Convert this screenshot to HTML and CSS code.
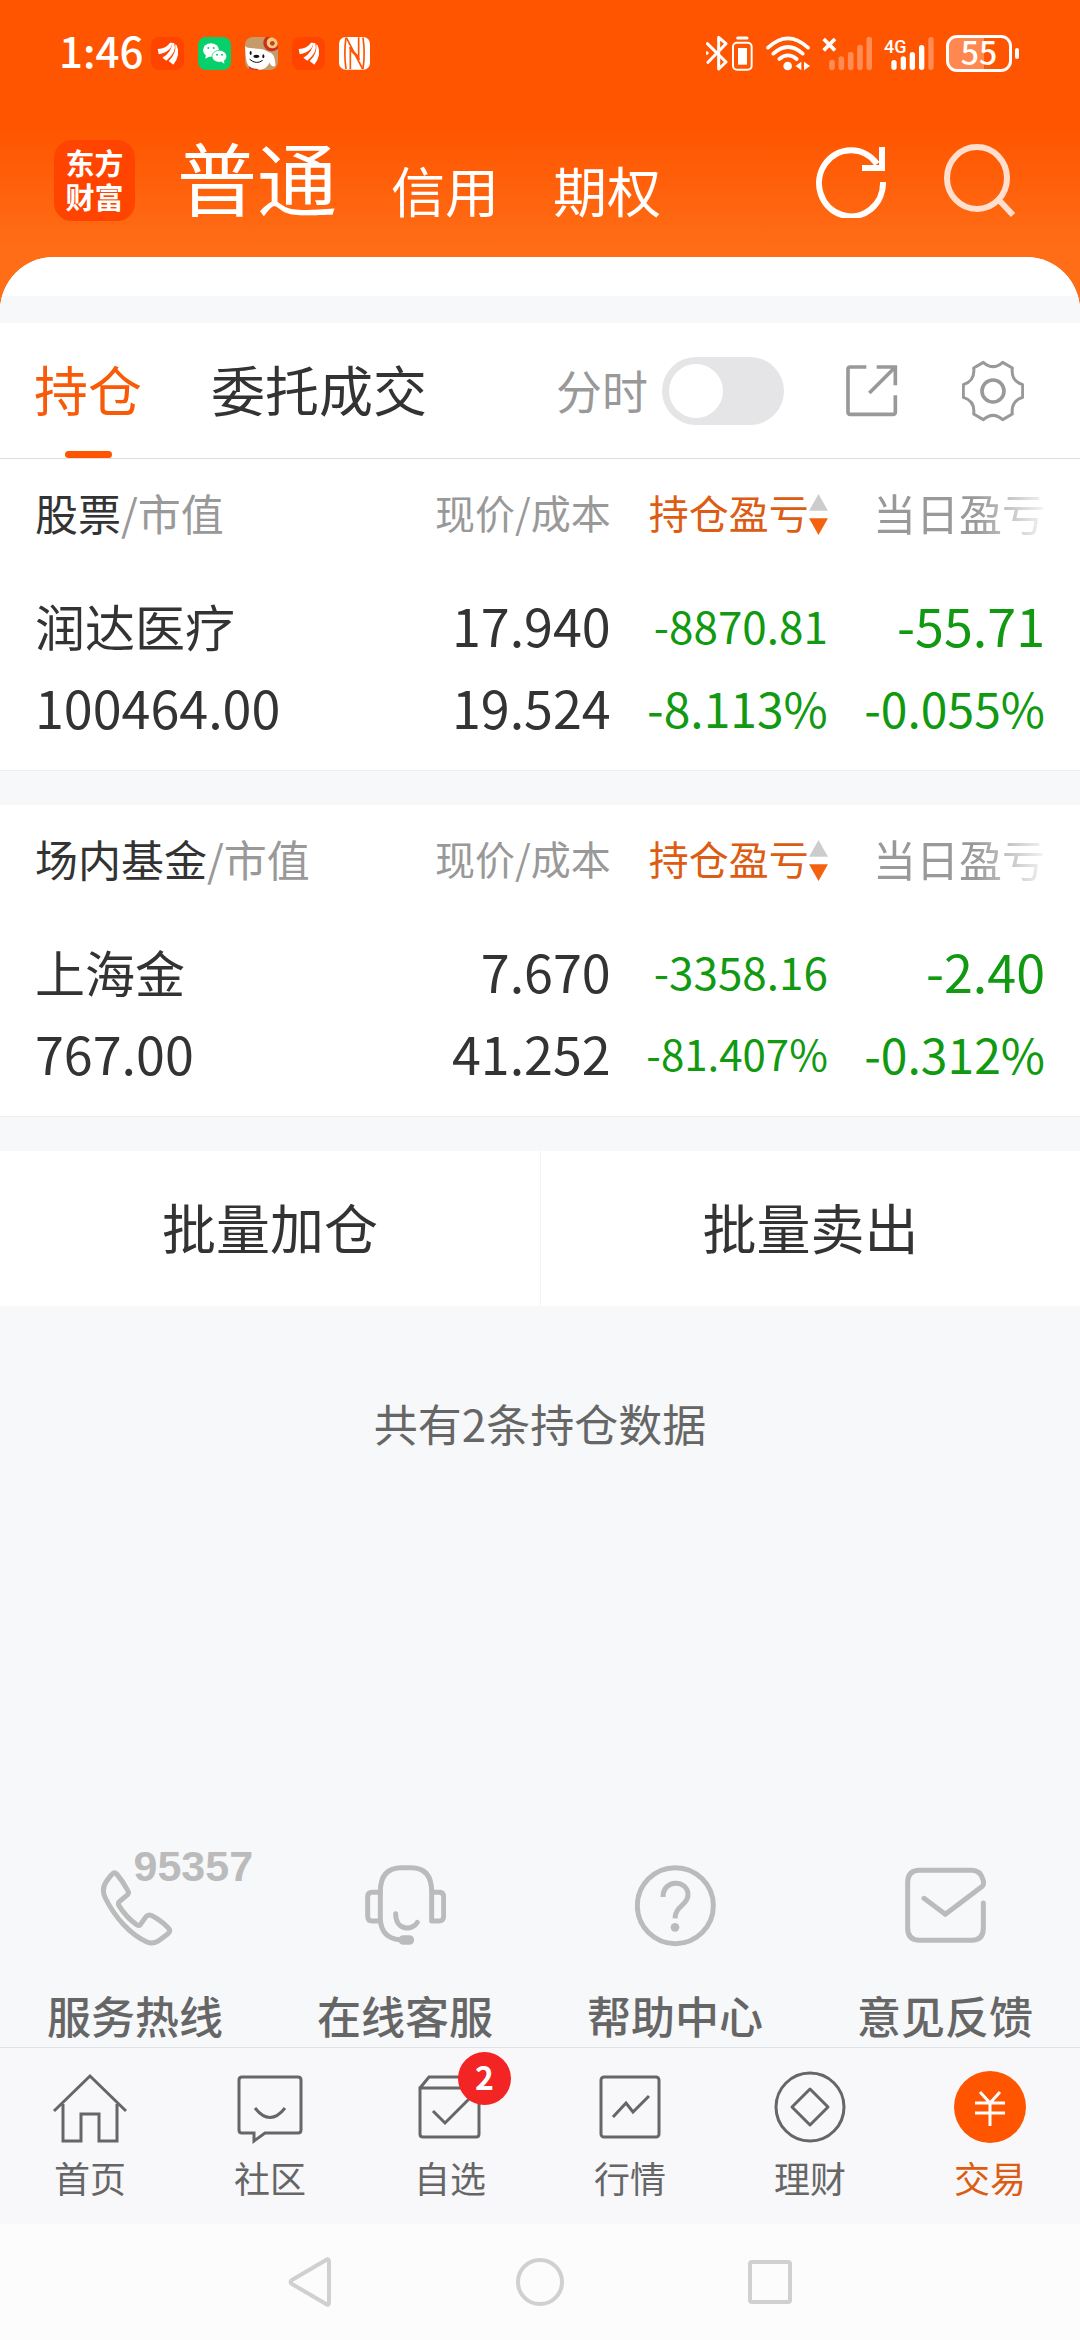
FILE: index.html
```html
<!DOCTYPE html>
<html lang="zh-CN">
<head>
<meta charset="utf-8">
<meta name="viewport" content="width=device-width, initial-scale=1">
<title>普通交易 - 持仓</title>
<link rel="stylesheet" href="styles.css">
</head>
<body>
<svg class="defs" aria-hidden="true">
  <symbol id="wing" viewBox="0 0 99 99">
    <g fill="#fff"><path d="M20 36Q46 35 57 17L63 17Q64 42 23 52Z"/><path d="M34 62Q62 46 64 17L70 19Q78 46 46 71Z"/><path d="M53 72Q76 52 73 22L77 25Q90 54 67 83Z"/></g>
  </symbol>
  <symbol id="sorter" viewBox="0 0 18 40">
    <path d="M9 0 18 16H0Z" fill="#ccc"/><path d="M0 23H18L9 39Z" fill="#f4620f"/>
  </symbol>
</svg>

<header class="top">
  <div class="status">
    <div class="status-side">
      <time class="clock">1:46</time>
      <div class="notices">
        <svg class="app dark" viewBox="0 0 99 99"><use href="#wing"/></svg>
        <svg class="app green" viewBox="0 0 99 99"><ellipse cx="39" cy="39" rx="24" ry="20" fill="#fff"/><path d="M24 50 22 65 38 57Z" fill="#fff"/><ellipse cx="64" cy="58" rx="22" ry="18" fill="#fff" stroke="#07cf69" stroke-width="2"/><path d="M70 74 79 80 78 68Z" fill="#fff"/><g fill="#07cf69"><circle cx="31" cy="33" r="3"/><circle cx="47" cy="33" r="3"/><circle cx="57" cy="53" r="3"/><circle cx="72" cy="53" r="3"/></g></svg>
        <svg class="app tan" viewBox="0 0 99 99"><circle cx="80" cy="18" r="25" fill="#c9301a"/><circle cx="82" cy="17" r="17" fill="#f8c77c"/><circle cx="82" cy="19" r="7" fill="#b5442a"/><path d="M0 28C14 40 45 28 66 43L78 48C88 52 92 75 91 86C84 92 77 86 73 76C67 102 30 105 12 88C1 76 2 48 0 28Z" fill="#fff"/><path d="M12 88Q22 96 40 96V99H12Z" fill="#d33"/><ellipse cx="34" cy="58" rx="9" ry="5" fill="#111"/><ellipse cx="17" cy="48" rx="3" ry="6" fill="#111"/><ellipse cx="55" cy="58" rx="3" ry="6" fill="#111"/><path d="M14 67Q34 84 53 70" fill="none" stroke="#111" stroke-width="3"/></svg>
        <svg class="app dark" viewBox="0 0 99 99"><use href="#wing"/></svg>
        <svg class="nfc" viewBox="0 0 93 99"><rect width="93" height="98" rx="20" fill="#fff"/><g fill="none" stroke="#ff5500" stroke-width="5"><path d="M21 2Q14 50 21 96M72 2Q79 50 72 96"/><path d="M34 97V38L62 68M59 1V60L31 31M22 2 71 96"/></g></svg>
      </div>
    </div>
    <div class="status-side right">
      <svg width="48" height="36" viewBox="18 30 144 108"><g fill="none" stroke="#fff" stroke-width="9" stroke-linejoin="round" stroke-linecap="round"><path d="M22 56 78 111 56 132V37L78 56 24 112"/><rect x="99" y="53" width="56" height="81" rx="12" stroke-width="6"/><path d="M113 39H141"/></g><circle cx="21" cy="84" r="5" fill="#fff"/><rect x="114" y="69" width="27" height="50" fill="#fff"/></svg>
      <svg width="44" height="36" viewBox="195 30 132 108"><g fill="none" stroke="#fff" stroke-width="11" stroke-linecap="round"><path d="M201 68Q261 12 321 68M217 86Q261 46 305 86M235 102Q261 80 287 102"/></g><circle cx="260" cy="123" r="13" fill="#fff"/><path d="M301 110V136L284 123ZM309 110V136L327 123Z" fill="#fff"/></svg>
      <svg width="50" height="36" viewBox="363 30 150 108"><path d="M368 42 402 76M402 42 368 76" stroke="#fff" stroke-width="11"/><g stroke="#ff8c55" stroke-width="17" stroke-linecap="round"><path d="M393 113V127M421 102V127M449 89V127M477 68V127M505 44V127"/></g></svg>
      <svg width="50" height="36" viewBox="549 30 150 108"><text class="net" x="549" y="83">4G</text><g stroke="#fff" stroke-width="16" stroke-linecap="round"><path d="M579 113V127M607 102V127M634 89V127M662 68V127"/><path d="M690 44V127" stroke="#ff8c55"/></g></svg>
      <div class="battery"><span class="level">55</span></div>
    </div>
  </div>

  <div class="title-bar">
    <div class="brand">东方<br>财富</div>
    <nav class="accounts">
      <a class="account current" href="#normal">普通</a>
      <a class="account" href="#credit">信用</a>
      <a class="account" href="#option">期权</a>
    </nav>
    <div class="tools">
      <button class="icon-btn" aria-label="刷新"><svg width="72" height="74" viewBox="0 0 72 74" fill="none" stroke="#fff" stroke-width="6"><path d="M67 38A32 33 0 1 1 61 20"/><path d="M66 3V24H46"/></svg></button>
      <button class="icon-btn faded" aria-label="搜索"><svg width="72" height="74" viewBox="0 0 72 74" fill="none" stroke="#fff" stroke-width="6"><ellipse cx="33" cy="34" rx="30" ry="31"/><path d="M54 55 69 71"/></svg></button>
    </div>
  </div>
</header>

<main class="sheet">
  <div class="sheet-lip"></div>

  <div class="tabs">
    <button class="tab active">持仓</button>
    <button class="tab">委托成交</button>
    <div class="tab-tools">
      <label class="toggle"><span class="toggle-text">分时</span><input class="switch" type="checkbox"></label>
      <button class="icon-btn" aria-label="分享"><svg width="54" height="54" viewBox="43 70 162 162" fill="none" stroke="#999" stroke-width="11"><path d="M104 79H56Q49 79 49 86V214Q49 221 56 221H184Q191 221 191 214V164"/><path d="M135 79H191V134M191 79 113 157"/></svg></button>
      <button class="icon-btn" aria-label="设置"><svg width="62" height="62" viewBox="393 58 186 186" fill="none" stroke="#999" stroke-width="9" stroke-linejoin="round"><path d="M515 65 544 82Q539 121 575 132V170Q539 181 544 220L515 237Q486 211 457 237L428 220Q433 181 397 170V132Q433 121 428 82L457 65Q486 91 515 65Z"/><circle cx="486" cy="151" r="33" stroke-width="11"/></svg></button>
    </div>
  </div>

  <section class="card">
    <table class="holdings">
      <thead><tr>
        <th class="name"><span class="kind">股票</span>/市值</th>
        <th>现价/成本</th>
        <th><button class="sort">持仓盈亏<svg width="19" height="42"><use href="#sorter"/></svg></button></th>
        <th class="large"><span class="fade">当日盈亏</span></th>
      </tr></thead>
      <tbody>
        <tr><td class="name title">润达医疗</td><td>17.940</td><td class="down small">-8870.81</td><td class="down">-55.71</td></tr>
        <tr><td class="name">100464.00</td><td>19.524</td><td class="down mid">-8.113%</td><td class="down mid">-0.055%</td></tr>
      </tbody>
    </table>
  </section>

  <section class="card">
    <table class="holdings">
      <thead><tr>
        <th class="name"><span class="kind">场内基金</span>/市值</th>
        <th>现价/成本</th>
        <th><button class="sort">持仓盈亏<svg width="19" height="42"><use href="#sorter"/></svg></button></th>
        <th class="large"><span class="fade">当日盈亏</span></th>
      </tr></thead>
      <tbody>
        <tr><td class="name title">上海金</td><td>7.670</td><td class="down small">-3358.16</td><td class="down">-2.40</td></tr>
        <tr><td class="name">767.00</td><td>41.252</td><td class="down tiny">-81.407%</td><td class="down mid">-0.312%</td></tr>
      </tbody>
    </table>
  </section>

  <div class="batch">
    <button class="batch-btn">批量加仓</button>
    <button class="batch-btn">批量卖出</button>
  </div>

  <p class="note">共有2条持仓数据</p>

  <nav class="services">
    <a class="service" href="#hotline">
      <span class="service-icon"><svg viewBox="-12 2 243 246"><path d="M42 27Q33 35 23 50C10 68 10 83 19 101C46 156 92 210 144 233Q160 240 178 230L207 208Q216 200 208 191Q186 168 156 153Q147 150 141 157L124 181Q119 186 111 180Q80 157 60 124Q56 116 61 112L86 91Q91 85 86 78Q72 51 53 29Q47 23 42 27Z"/></svg><span class="hotline-no">95357</span></span>
      服务热线
    </a>
    <a class="service" href="#chat">
      <span class="service-icon"><svg viewBox="0 0 243 246"><path d="M46 82H22Q8 82 8 96V152Q8 168 22 168H46"/><path d="M46 168V80Q46 8 110 8H138Q200 8 200 80V168H222Q236 168 236 152V96Q236 82 222 82H200M46 164Q50 220 104 224"/><path d="M92 146C92 200 144 196 157 172"/><rect x="108" y="218" width="32" height="14" rx="7" fill="#bbb"/></svg></span>
      在线客服
    </a>
    <a class="service" href="#help">
      <span class="service-icon"><svg viewBox="0 0 243 246"><circle cx="121" cy="122" r="114"/><path stroke-linecap="butt" d="M84 96C84 40 159 44 159 89C159 120 121 122 120 160"/><circle cx="120" cy="187" r="13" fill="#bbb" stroke="none"/></svg></span>
      帮助中心
    </a>
    <a class="service" href="#feedback">
      <span class="service-icon"><svg viewBox="0 0 243 246"><path d="M57 100 121 148 232 64Q238 58 234 44Q226 16 200 16H44Q8 16 8 52V190Q8 226 44 226H200Q235 226 235 190V114"/></svg></span>
      意见反馈
    </a>
  </nav>
</main>

<nav class="tabbar">
  <a class="tabbar-item" href="#home">
    <svg viewBox="0 0 76 76"><path d="M2 41 38 6 74 41M11 34V71H29V44H47V71H65V34"/></svg>首页</a>
  <a class="tabbar-item" href="#community">
    <svg viewBox="0 0 76 76"><path d="M10 7H66Q69 7 69 10V60Q69 63 66 63H33L22 71V63H10Q7 63 7 60V10Q7 7 10 7Z"/><path d="M23 38Q38 57 53 38"/></svg>社区</a>
  <a class="tabbar-item" href="#watchlist">
    <svg viewBox="0 0 76 76"><path d="M8 18 17 7H59L67 18V64Q67 67 64 67H11Q8 67 8 64V18H67M21 41 33 53 58 28"/></svg>自选<span class="badge">2</span></a>
  <a class="tabbar-item" href="#market">
    <svg viewBox="0 0 76 76"><rect x="9" y="7" width="58" height="60" rx="3"/><path d="M21 47 34 33 41 42 57 26"/></svg>行情</a>
  <a class="tabbar-item" href="#wealth">
    <svg viewBox="0 0 76 76"><circle cx="38" cy="37" r="34"/><path stroke-linejoin="round" d="M38 19 56 37 38 55 20 37Z"/></svg>理财</a>
  <a class="tabbar-item active" href="#trade">
    <svg viewBox="0 0 76 76"><circle cx="38" cy="37" r="36" fill="#ff5500" stroke="none"/><path stroke="#fff" d="M28 22 38 33 48 22M38 33V56M23 33H53M23 43H53"/></svg>交易</a>
</nav>

<div class="sysnav">
  <button class="icon-btn" aria-label="返回"><svg width="48" height="52" viewBox="0 0 48 52"><path d="M6 24Q3 26 6 28L40 48Q43 50 43 46V6Q43 2 40 4Z"/></svg></button>
  <button class="icon-btn" aria-label="主屏幕"><svg width="52" height="52" viewBox="0 0 52 52"><circle cx="26" cy="26" r="22"/></svg></button>
  <button class="icon-btn" aria-label="最近任务"><svg width="48" height="52" viewBox="0 0 48 52"><rect x="4" y="6" width="40" height="40" rx="2"/></svg></button>
</div>
</body>
</html>
```

FILE: styles.css
```css
* { box-sizing: border-box; }

body {
  margin: 0;
  min-height: 100vh;
  display: flex;
  flex-direction: column;
  background: #f7f8fa;
  color: #333;
  font-family: "Noto Sans CJK SC", sans-serif;
}

a { color: inherit; text-decoration: none; }

button {
  border: 0;
  padding: 0;
  background: none;
  color: inherit;
  font: inherit;
}

svg { display: block; }
.defs { position: absolute; width: 0; height: 0; }
.icon-btn { display: flex; }

/* Header */
.top {
  padding-bottom: 86px;
  background: linear-gradient(#ff5500 126px, #ff6d17 250px);
  color: #fff;
}

.status {
  display: flex;
  justify-content: space-between;
  height: 106px;
  padding: 0 61px 0 59px;
}

.status-side { display: flex; align-items: center; gap: 8px; }
.status-side.right { gap: 12px; }
.clock { font-size: 42px; line-height: 48px; font-weight: 500; padding-bottom: 6px; }
.notices { display: flex; gap: 14px; }
.app { width: 33px; height: 33px; border-radius: 8px; }
.dark { background: #ff4400; }
.green { background: #07cf69; }
.tan { background: #c79a6a; }
.nfc { width: 31px; height: 33px; }
.net { font: 500 54px/1 "Roboto", sans-serif; fill: #fff; }

.battery {
  position: relative;
  width: 66px;
  height: 37px;
  margin-right: 7px;
  border: 3px solid #fff;
  border-radius: 11px;
  background: linear-gradient(90deg, #ff8850 59%, transparent 59%);
}
.battery::after {
  content: "";
  position: absolute;
  right: -10px;
  top: 10px;
  width: 4px;
  height: 11px;
  border-radius: 2px;
  background: #fff;
}
.level {
  display: block;
  text-align: center;
  font-size: 32px;
  line-height: 27px;
  font-weight: 500;
}

.title-bar {
  display: flex;
  align-items: center;
  height: 119px;
  padding: 0 64px 0 54px;
}

.brand {
  width: 81px;
  height: 81px;
  margin-top: 34px;
  padding-top: 5px;
  align-self: flex-start;
  border-radius: 18px;
  background: #ff4400;
  text-align: center;
  font-size: 29px;
  line-height: 34px;
  font-weight: 700;
}

.accounts {
  display: flex;
  align-items: flex-end;
  gap: 54px;
  margin-left: 42px;
  padding-top: 18px;
}
.account { font-size: 54px; line-height: 66px; }
.current { font-size: 80px; line-height: 96px; }

.tools { display: flex; gap: 56px; margin-left: auto; padding-top: 30px; }
.faded { opacity: 0.8; }

/* Content sheet */
.sheet {
  flex: 1;
  display: flex;
  flex-direction: column;
  margin-top: -54px;
  border-radius: 54px 54px 0 0;
  overflow: hidden;
  background: #f7f8fa;
}

.sheet-lip { height: 66px; border-bottom: 27px solid #f7f8fa; background: #fff; }

.tabs {
  display: flex;
  gap: 69px;
  height: 136px;
  padding: 0 56px 0 34px;
  border-bottom: 1px solid #ddd;
  background: #fff;
}

.tab {
  position: relative;
  padding-bottom: 4px;
  font-size: 54px;
  line-height: 64px;
}
.tab.active { color: #f95a08; }
.tab.active::after {
  content: "";
  position: absolute;
  left: 50%;
  bottom: 0;
  width: 47px;
  height: 7px;
  margin-left: -23px;
  border-radius: 4px;
  background: #ff5500;
}

.tab-tools { display: flex; align-items: center; gap: 62px; margin-left: auto; }
.toggle { display: flex; align-items: center; gap: 14px; font-size: 46px; line-height: 54px; color: #999; }
.toggle-text { padding-bottom: 4px; }

.switch {
  appearance: none;
  width: 122px;
  height: 68px;
  margin: 0;
  padding: 7px;
  border-radius: 34px;
  background: #e5e5e7;
}
.switch::before {
  content: "";
  display: block;
  width: 54px;
  height: 54px;
  border-radius: 50%;
  background: #fff;
}
.switch:checked { background: #ff5500; }
.switch:checked::before { margin-left: auto; }

/* Holdings */
.card {
  margin-bottom: 34px;
  padding: 0 35px 22px;
  border-bottom: 1px solid #eee;
  background: #fff;
}

.holdings { width: 100%; table-layout: fixed; border-collapse: collapse; }
.holdings th {
  width: 21.5%;
  height: 125px;
  padding: 23px 0 0;
  vertical-align: top;
  text-align: right;
  white-space: nowrap;
  font-size: 40px;
  line-height: 60px;
  font-weight: 400;
  color: #999;
}
.holdings td {
  height: 82px;
  padding: 0;
  text-align: right;
  white-space: nowrap;
  font-size: 52px;
  line-height: 82px;
}
.holdings th.name { width: 35.5%; font-size: 43px; }
.holdings .name { text-align: left; }
.holdings th.large { font-size: 43px; }
.holdings .title { font-size: 50px; }
.holdings .kind { color: #333; }
.holdings .down { color: #119911; }
.holdings .mid { font-size: 48px; }
.holdings .small { font-size: 44px; }
.holdings .tiny { font-size: 42px; }

.sort { display: inline-flex; align-items: center; color: #dd5c14; }
.sort svg { margin-top: 6px; }
.fade {
  -webkit-mask-image: linear-gradient(90deg, #000 60%, rgba(0, 0, 0, 0.1));
  mask-image: linear-gradient(90deg, #000 60%, rgba(0, 0, 0, 0.1));
}

.batch { display: grid; grid-template-columns: 1fr 1fr; background: #fff; }
.batch-btn { height: 155px; padding-bottom: 4px; font-size: 54px; line-height: 64px; }
.batch-btn + .batch-btn { border-left: 1px solid #f3f3f5; }

.note {
  margin: 87px 0 0;
  text-align: center;
  font-size: 44px;
  line-height: 60px;
  color: #666;
}

.services {
  display: grid;
  grid-template-columns: repeat(4, 1fr);
  margin-top: auto;
  padding-bottom: 2px;
}
.service {
  display: flex;
  flex-direction: column;
  align-items: center;
  gap: 38px;
  font-size: 44px;
  line-height: 60px;
  font-weight: 500;
  color: #666;
}
.service-icon {
  position: relative;
  width: 81px;
  height: 82px;
}
.service-icon svg {
  width: 100%;
  height: 100%;
  fill: none;
  stroke: #bbb;
  stroke-width: 15;
  stroke-linecap: round;
  stroke-linejoin: round;
}
.hotline-no {
  position: absolute;
  left: 39px;
  top: -21px;
  font: 700 43px/44px "Liberation Sans", sans-serif;
  color: #bbb;
}

/* Bottom tab bar */
.tabbar {
  display: grid;
  grid-template-columns: repeat(6, 1fr);
  height: 177px;
  padding-top: 22px;
  border-top: 1px solid #e2e3e6;
  background: #f8f8fa;
}
.tabbar-item {
  position: relative;
  display: flex;
  flex-direction: column;
  align-items: center;
  gap: 7px;
  font-size: 36px;
  line-height: 48px;
  color: #666;
}
.tabbar-item svg {
  width: 76px;
  height: 76px;
  fill: none;
  stroke: #666;
  stroke-width: 3;
}
.tabbar-item.active { color: #dd5c14; }

.badge {
  position: absolute;
  left: 50%;
  top: -18px;
  width: 53px;
  height: 53px;
  margin-left: 8px;
  border-radius: 50%;
  background: #f22424;
  color: #fff;
  text-align: center;
  font-size: 32px;
  line-height: 49px;
  font-weight: 700;
}

/* System navigation */
.sysnav {
  display: flex;
  justify-content: center;
  align-items: center;
  gap: 180px;
  height: 116px;
  background: #fcfcfc;
}
.sysnav svg { fill: none; stroke: #d0d0d0; stroke-width: 4; }
```
